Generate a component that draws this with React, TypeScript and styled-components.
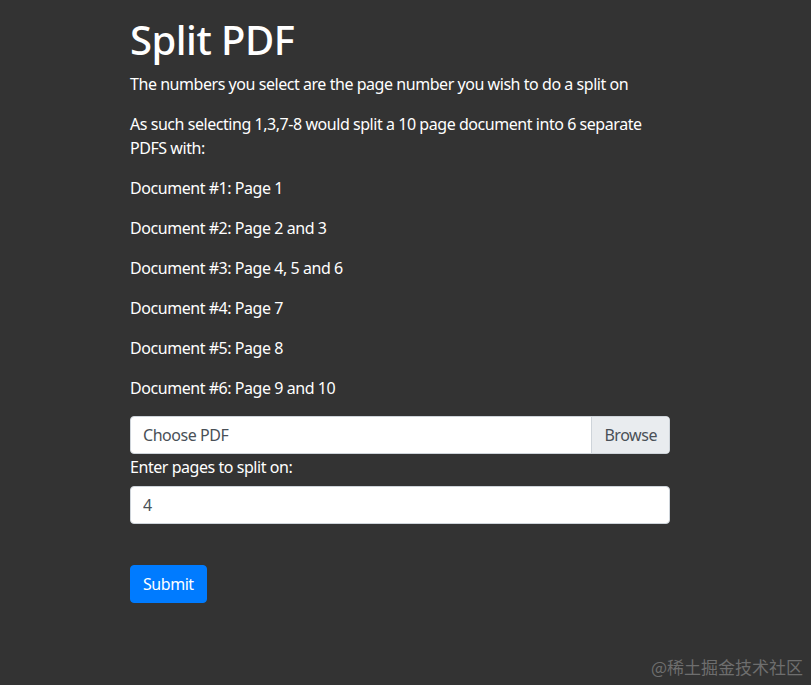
import * as React from "react";
import styled, { createGlobalStyle } from "styled-components";

const GlobalStyle = createGlobalStyle`
    html, body {
        margin: 0;
        padding: 0;
        background: #333333;
    }
    body {
        font-family: "Segoe UI", "Noto Sans", "Liberation Sans", sans-serif;
        font-size: 16px;
        line-height: 1.5;
        letter-spacing: -0.45px;
        color: #ffffff;
    }
`;

const Page = styled.div`
    position: relative;
    min-height: 685px;
    padding: 16px 0 0 130px;
    box-sizing: border-box;
`;

const Content = styled.div`
    width: 540px;
`;

const Title = styled.h1`
    margin: 0 0 8px;
    font-size: 40px;
    font-weight: 500;
    line-height: 1.2;
    letter-spacing: -0.5px;
`;

const Para = styled.p`
    margin: 0 0 16px;
`;

const FileGroup = styled.div`
    display: flex;
    height: 38px;
    box-sizing: border-box;
    background: #ffffff;
    border: 1px solid #ced4da;
    border-radius: 4px;
    overflow: hidden;
`;

const FileLabel = styled.span`
    flex: 1;
    padding: 6px 12px;
    color: #495057;
`;

const BrowseButton = styled.span`
    padding: 6px 12px;
    background: #e9ecef;
    border-left: 1px solid #ced4da;
    color: #495057;
`;

const Label = styled.label`
    display: block;
    margin: 1px 0 7px;
`;

const TextInput = styled.input`
    display: block;
    width: 100%;
    height: 38px;
    box-sizing: border-box;
    padding: 6px 12px;
    font: inherit;
    letter-spacing: inherit;
    color: #495057;
    background: #ffffff;
    border: 1px solid #ced4da;
    border-radius: 4px;
    outline: none;
`;

const FormGroup = styled.div`
    margin-bottom: 41px;
`;

const SubmitButton = styled.button`
    height: 38px;
    padding: 6px 12px;
    font: inherit;
    letter-spacing: inherit;
    color: #ffffff;
    background: #007bff;
    border: 1px solid #007bff;
    border-radius: 4px;
`;

const Watermark = styled.div`
    position: absolute;
    right: 8px;
    bottom: 6px;
    font-family: "Noto Sans CJK SC", sans-serif;
    font-size: 17px;
    letter-spacing: 0;
    color: #6e6e6e;
`;

const docs = [
    "Document #1: Page 1",
    "Document #2: Page 2 and 3",
    "Document #3: Page 4, 5 and 6",
    "Document #4: Page 7",
    "Document #5: Page 8",
    "Document #6: Page 9 and 10",
];

const App = () => {
    return (
        <>
            <GlobalStyle />
            <Page>
                <Content>
                    <Title>Split PDF</Title>
                    <Para>The numbers you select are the page number you wish to do a split on</Para>
                    <Para>As such selecting 1,3,7-8 would split a 10 page document into 6 separate PDFS with:</Para>
                    {docs.map(d => (
                        <Para key={d}>{d}</Para>
                    ))}
                    <FileGroup>
                        <FileLabel>Choose PDF</FileLabel>
                        <BrowseButton>Browse</BrowseButton>
                    </FileGroup>
                    <Label>Enter pages to split on:</Label>
                    <FormGroup>
                        <TextInput defaultValue="4" />
                    </FormGroup>
                    <SubmitButton>Submit</SubmitButton>
                </Content>
                <Watermark>@稀土掘金技术社区</Watermark>
            </Page>
        </>
    );
};

export default App;
